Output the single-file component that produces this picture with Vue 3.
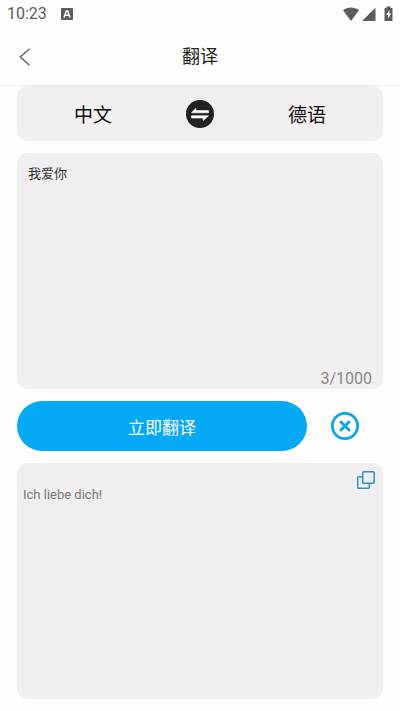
<script setup>
import { computed, ref } from 'vue'

const limit = 1000
const from = ref('中文')
const to = ref('德语')
const source = ref('我爱你')
const result = ref('Ich liebe dich!')
const count = computed(() => source.value.length)

function swap() {
  const previous = from.value
  from.value = to.value
  to.value = previous
}

function clear() {
  source.value = ''
  result.value = ''
}
</script>

<template>
  <div class="screen">
    <div class="status">
      <span class="time">10:23</span>
      <svg class="badge" width="12" height="12" viewBox="0 0 12 12" aria-hidden="true">
        <rect width="12" height="12" rx="1" fill="#5c5c5c" />
        <path d="M3 9.500 5.300 3h1.400L9 9.500M4 7.200h4" fill="none" stroke="#fff" stroke-width="1.400" />
      </svg>
      <svg class="signals" width="50" height="16" viewBox="0 0 50 16" aria-hidden="true">
        <g fill="#5c5c5c">
          <path d="M0 4.300C4.500 .6 11.500 .6 16 4.300L8 15z" />
          <path d="M32.500 1.800V15H19z" />
          <path d="M43.500 .5h4V2h1.500q.5 0 .5.500v12q0 .5-.5.500h-7q-.5 0-.5-.5v-12q0-.5.5-.5h1.500z" />
        </g>
        <path d="M46.500 4 43.200 9h1.900v3.600L48 7.600h-1.700z" fill="#fff" />
      </svg>
    </div>

    <header class="header">
      <button class="back" type="button" aria-label="返回">
        <svg width="12" height="18" viewBox="0 0 12 18" aria-hidden="true">
          <path d="M10.500 .8 1.200 9l9.300 8.200" fill="none" stroke="#555" stroke-width="1.200" />
        </svg>
      </button>
      <h1 class="title">翻译</h1>
    </header>

    <main class="content">
      <div class="languages">
        <button class="language" type="button">{{ from }}</button>
        <button class="swap" type="button" aria-label="交换语言" @click="swap">
          <svg width="28" height="28" viewBox="0 0 28 28" aria-hidden="true">
            <circle cx="14" cy="14" r="14" fill="#222" />
            <g fill="#fff" stroke="#fff" stroke-width=".6" stroke-linejoin="round">
              <path d="M5.500 12.800 9.800 8.300v2.300h12.700v2.200z" />
              <path d="M22.500 15.800h-17V18h11.700v2.500z" />
            </g>
          </svg>
        </button>
        <button class="language" type="button">{{ to }}</button>
      </div>

      <section class="panel">
        <textarea v-model="source" class="source" aria-label="原文" :maxlength="limit" spellcheck="false"></textarea>
        <div class="counter">{{ count }}/{{ limit }}</div>
      </section>

      <div class="actions">
        <button class="translate" type="button">立即翻译</button>
        <button class="clear" type="button" aria-label="清空" @click="clear">
          <svg width="28" height="28" viewBox="0 0 28 28" fill="none" stroke="#0fa3e8" aria-hidden="true">
            <circle cx="14" cy="14" r="12.600" stroke-width="2.800" />
            <path d="m10 10 8 8m0-8-8 8" stroke-width="3" stroke-linecap="round" />
          </svg>
        </button>
      </div>

      <section class="panel">
        <div class="tools">
          <button class="copy" type="button" aria-label="复制">
            <svg width="18" height="18" viewBox="0 0 18 18" fill="none" stroke="#2a92c4" stroke-width="1.500" aria-hidden="true">
              <rect x="5.700" y=".8" width="11.500" height="11.500" rx="1" />
              <path d="M5.700 5.700h-4q-1 0-1 1v9.500q0 1 1 1h9.600q1 0 1-1v-3.900" />
            </svg>
          </button>
        </div>
        <p class="result">{{ result }}</p>
      </section>
    </main>
  </div>
</template>

<style>
body {
  background: #fefefe;
}
</style>

<style scoped>
.screen {
  display: flex;
  flex-direction: column;
  min-height: 100vh;
  font-family: Roboto, "Noto Sans CJK SC", sans-serif;
  color: #222;
}

button {
  display: flex;
  align-items: center;
  justify-content: center;
  margin: 0;
  padding: 0;
  border: 0;
  background: none;
  color: inherit;
  font-family: inherit;
  cursor: pointer;
}

.status {
  display: flex;
  align-items: center;
  height: 28px;
  padding: 0 7px;
  color: #5c5c5c;
}

.time {
  font-size: 16px;
  line-height: 28px;
}

.badge {
  margin-left: 14px;
}

.signals {
  margin-left: auto;
}

.header {
  display: grid;
  grid-template-columns: 50px 1fr 50px;
  align-items: center;
  height: 57px;
  border-bottom: 1px solid #ececec;
}

.back {
  height: 48px;
}

.title {
  margin: 0;
  font-size: 18px;
  font-weight: 400;
  line-height: 24px;
  text-align: center;
}

.content {
  display: flex;
  flex: 1;
  flex-direction: column;
  gap: 12px;
  padding: 0 17px 12px;
}

.languages {
  display: grid;
  grid-template-columns: 1fr 62px 1fr;
  height: 55px;
  border-radius: 10px;
  background: #f0eeef;
}

.language {
  color: #111;
  font-size: 19px;
}

.panel {
  display: flex;
  flex: 1 1 0px;
  flex-direction: column;
  min-height: 200px;
  border-radius: 10px;
  background: #f0eeef;
}

.source {
  flex: 1 1 0px;
  min-height: 0;
  padding: 11px 11px 0;
  border: 0;
  outline: 0;
  background: none;
  color: #333;
  font-family: inherit;
  font-size: 13px;
  line-height: 20px;
  resize: none;
}

.counter {
  padding: 0 11px;
  color: #888;
  font-size: 16px;
  line-height: 20px;
  text-align: right;
}

.actions {
  display: grid;
  grid-template-columns: 1fr 76px;
  height: 50px;
}

.translate {
  border-radius: 25px;
  background: #05a9f6;
  color: #fff;
  font-size: 17px;
}

.tools {
  display: flex;
  justify-content: flex-end;
  padding: 8px 8px 0;
}

.result {
  margin: 0;
  padding: 0 6px;
  color: #777;
  font-size: 13px;
  line-height: 12px;
}
</style>
